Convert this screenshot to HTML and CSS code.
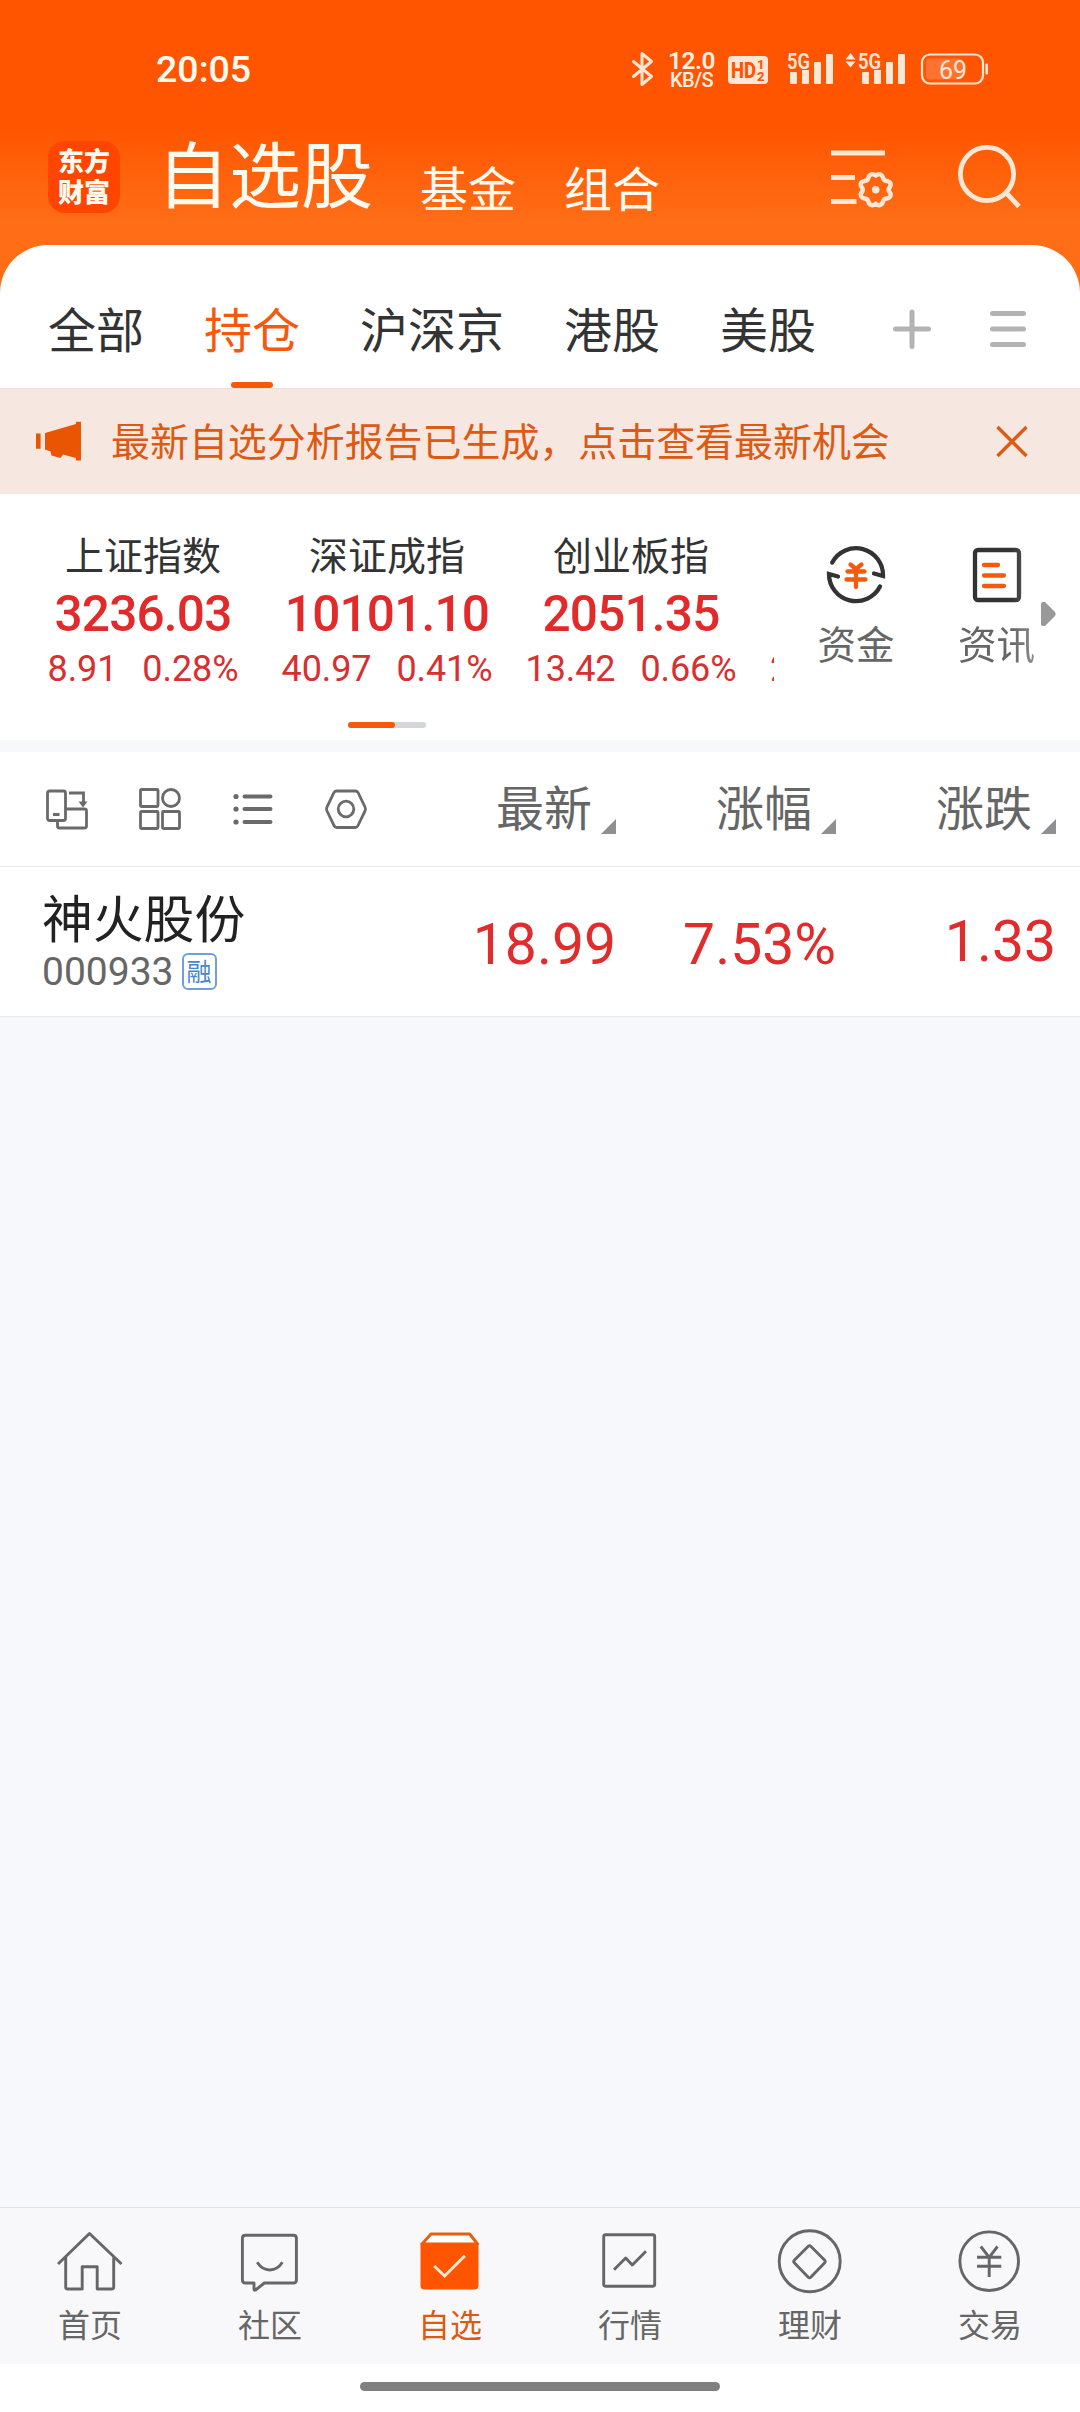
FILE: index.html
```html
<!DOCTYPE html>
<html lang="zh-CN">
<head>
<meta charset="utf-8">
<title>自选股</title>
<link rel="stylesheet" href="styles.css">
</head>
<body>
<div class="app">
  <header class="top">
    <div class="status">
      <span class="clock">20:05</span>
      <div class="status-icons">
        <svg class="bt" width="22" height="36" viewBox="0 0 22 36"><path d="M1.5 10.5 19.500 25.500 10 33.500V2.500L19.500 10.500 1.500 25.500"/></svg>
        <div class="speed"><b>12.0</b><span>KB/S</span></div>
        <svg class="hd" width="40" height="28" viewBox="0 0 40 28"><rect width="40" height="28" rx="4"/><g class="hd-text"><text x="3" y="22" font-size="22" textLength="25" lengthAdjust="spacingAndGlyphs">HD</text><text x="29" y="13" font-size="13">1</text><text x="29" y="25" font-size="13">2</text></g></svg>
        <svg class="sig sig-one" width="48" height="34" viewBox="0 0 48 34"><text x="0" y="17.500" textLength="23" lengthAdjust="spacingAndGlyphs">5G</text><path d="M3 22a1 1 0 0 1 1-1h5a1 1 0 0 1 1 1v10a1 1 0 0 1-1 1H4a1 1 0 0 1-1-1zM15 19h7v13a1 1 0 0 1-1 1h-5a1 1 0 0 1-1-1zM27 12a1 1 0 0 1 1-1h5a1 1 0 0 1 1 1v20a1 1 0 0 1-1 1h-5a1 1 0 0 1-1-1zM39 4a1 1 0 0 1 1-1h5a1 1 0 0 1 1 1v28a1 1 0 0 1-1 1h-5a1 1 0 0 1-1-1z"/></svg>
        <svg class="sig sig-two" width="61" height="34" viewBox="0 0 61 34"><path d="M5.500 2 10.500 8.500H.5zM5.500 16.500.5 10.500h10z"/><text x="13" y="17.500" textLength="23" lengthAdjust="spacingAndGlyphs">5G</text><path d="M17 22a1 1 0 0 1 1-1h5a1 1 0 0 1 1 1v10a1 1 0 0 1-1 1h-5a1 1 0 0 1-1-1zM29 19h7v13a1 1 0 0 1-1 1h-5a1 1 0 0 1-1-1zM41 12a1 1 0 0 1 1-1h5a1 1 0 0 1 1 1v20a1 1 0 0 1-1 1h-5a1 1 0 0 1-1-1zM53 4a1 1 0 0 1 1-1h5a1 1 0 0 1 1 1v28a1 1 0 0 1-1 1h-5a1 1 0 0 1-1-1z"/></svg>
        <svg class="battery" width="68" height="32" viewBox="0 0 68 32"><rect class="case" x="1" y="1.500" width="61" height="29" rx="8"/><rect class="level" x="5" y="5.500" width="37" height="21" rx="4"/><rect class="nub" x="64.500" y="10.500" width="2.500" height="11" rx="1"/><text x="18" y="25.500">69</text></svg>
      </div>
    </div>
    <div class="titlebar">
      <div class="logo"><span>东方</span><span>财富</span></div>
      <h1>自选股</h1>
      <span class="sub-title fund">基金</span>
      <span class="sub-title combo">组合</span>
      <svg class="filter" width="64" height="60" viewBox="0 0 64 60"><path d="M1 7h54M1 31.500h24M1 55.500h25.500"/><path class="gear" d="M45.700 29.500c2.800-2.200 6.300-1.500 7.300 2.300.5 2.200 1.400 2.900 3.600 3.200 3.900.5 5.200 3.500 3 6.300-1.200 1.500-1.200 3.300 0 4.800 2.200 2.800.9 5.800-3 6.300-2.200.3-3.100 1-3.600 3.200-1 3.800-4.500 4.500-7.300 2.300-2.800 2.200-6.300 1.500-7.300-2.300-.5-2.200-1.400-2.900-3.600-3.200-3.900-.5-5.200-3.500-3-6.300 1.200-1.500 1.200-3.300 0-4.800-2.200-2.800-.9-5.800 3-6.300 2.200-.3 3.100-1 3.600-3.200 1-3.800 4.500-4.500 7.300-2.300z"/><circle class="dot" cx="45.700" cy="43.700" r="3.800"/></svg>
      <svg class="search" width="64" height="66" viewBox="0 0 64 66"><circle cx="30" cy="30" r="26.600"/><path d="M48.500 48 62 62.500"/></svg>
    </div>
  </header>

  <nav class="tabs">
    <a>全部</a>
    <a class="active">持仓</a>
    <a>沪深京</a>
    <a>港股</a>
    <a>美股</a>
    <svg class="plus" width="40" height="40" viewBox="0 0 40 40"><path d="M3.500 20h33M20 3v34.500"/></svg>
    <svg class="menu" width="36" height="40" viewBox="0 0 36 40"><path d="M2.500 4.500h31M2.500 20h31M2.500 35.500h31"/></svg>
  </nav>

  <div class="notice">
    <svg class="horn" width="46" height="40" viewBox="0 0 46 40"><path d="M0 12.500h4.600v15.300H0zM9 12 40 3V.7h5V39.600h-5V37L27 33.500 24.500 37 15.500 34.500 14.500 30.500 9 28.500z"/></svg>
    <p>最新自选分析报告已生成，点击查看最新机会</p>
    <svg class="close" width="32" height="32" viewBox="0 0 32 32"><path d="M1.500 2 30.500 31M30.500 2 1.500 31"/></svg>
  </div>

  <section class="market">
    <div class="market-row">
      <div class="indices">
        <div class="index"><h2>上证指数</h2><strong>3236.03</strong><p><span>8.91</span><span>0.28%</span></p></div>
        <div class="index"><h2>深证成指</h2><strong>10101.10</strong><p><span>40.97</span><span>0.41%</span></p></div>
        <div class="index"><h2>创业板指</h2><strong>2051.35</strong><p><span>13.42</span><span>0.66%</span></p></div>
        <div class="index next"><p><span>2</span></p></div>
      </div>
      <div class="shortcuts">
        <div class="shortcut">
          <svg width="64" height="64" viewBox="0 0 64 64"><path class="ring" d="M8.200 19.500A27 27 0 0 1 59 33l-9-2.500M56 43.500A27 27 0 0 1 5 31l9 2.500"/><path class="yen" d="M26.500 21.500 32 26l5.500-4.500M23.500 28.500h17M22.500 36.500h19M32 26v18"/></svg>
          <span>资金</span>
        </div>
        <div class="shortcut faded">
          <svg width="64" height="64" viewBox="0 0 64 64"><rect class="doc" x="10" y="7" width="44" height="50" rx="3"/><path class="yen" d="M19 22h14M19 32.500h20M19 43h20"/></svg>
          <span>资讯</span>
        </div>
      </div>
      <svg class="more" width="15" height="24" viewBox="0 0 15 24"><path d="M0 2Q0 0 2 0H4L14 10Q15.500 12 14 14L4 24H2Q0 24 0 22z"/></svg>
    </div>
    <div class="pager"><i></i></div>
  </section>

  <section class="list-head">
    <div class="tools">
      <svg width="42" height="42" viewBox="0 0 42 42"><rect x="1.500" y="3" width="18" height="29.500" rx="2"/><path d="M7 26.500h6.500M23 5h14.500v10M11.500 34v4q0 2 2 2h25q2 0 2-2V23q0-2-2-2H20"/><path class="fill" d="M32.500 13.500h9L37 19.500z"/></svg>
      <svg width="42" height="42" viewBox="0 0 42 42"><rect x="1.500" y="1.500" width="17.500" height="17" rx="1"/><circle cx="32" cy="10" r="8.500"/><rect x="1.500" y="23.500" width="17.500" height="17" rx="1"/><rect x="23.500" y="23.500" width="17" height="17" rx="1"/></svg>
      <svg width="42" height="42" viewBox="0 0 42 42"><path class="bars" d="M12.500 8.500h26M12.500 21h26M12.500 34h26"/><g class="fill"><circle cx="4" cy="8.500" r="2.600"/><circle cx="4" cy="21" r="2.600"/><circle cx="4" cy="34" r="2.600"/></g></svg>
      <svg width="42" height="42" viewBox="0 0 42 42"><path d="M11.500 3h19q1.500 0 2.500 1.500l7 14.500q1 2 0 4l-7 14.500q-1 2-2.500 2h-19q-1.500 0-2.500-2L2 23q-1-2 0-4L9 4.500q1-1.500 2.500-1.500z"/><circle cx="21" cy="21" r="7.800"/></svg>
    </div>
    <div class="col">最新<i></i></div>
    <div class="col">涨幅<i></i></div>
    <div class="col">涨跌<i></i></div>
  </section>

  <section class="stock">
    <div class="stock-name"><h3>神火股份</h3><div class="code"><span>000933</span><em>融</em></div></div>
    <div class="val">18.99</div>
    <div class="val">7.53%</div>
    <div class="val change">1.33</div>
  </section>

  <main class="blank"></main>

  <nav class="bottom">
    <a><svg width="64" height="64" viewBox="0 0 64 64"><path d="M0 34 31.500 3.500 63.500 34M7.700 27v30q0 2 2 2h14.500V36.700h15V59h14.500q2 0 2-2V27"/></svg><span>首页</span></a>
    <a><svg width="64" height="64" viewBox="0 0 64 64"><path d="M7.400 5.300h48q3 0 3 3V50q0 3-3 3h-29L17.500 60q-1.500.8-1.500-1V53H7.400q-3 0-3-3V8.300q0-3 3-3z"/><path d="M19.200 32.300q5 7.700 12.600 7.700t12.600-7.700"/></svg><span>社区</span></a>
    <a class="active"><svg width="64" height="64" viewBox="0 0 64 64"><path class="lid" d="M4 14 13 4h38.700L59.500 14z"/><path class="box" d="M2.500 13h58v42.500q0 4-4 4h-50q-4 0-4-4z"/><path class="tick" d="M16.200 36 26.600 46 46.900 25.700"/></svg><span>自选</span></a>
    <a><svg width="64" height="64" viewBox="0 0 64 64"><rect x="5.700" y="4.700" width="51" height="51.500" rx="2"/><path d="M16 39.700 27.700 28 34.300 35 48 21.300"/></svg><span>行情</span></a>
    <a><svg width="64" height="64" viewBox="0 0 64 64"><circle cx="31.700" cy="31.300" r="30.500"/><path d="M30 16.500q1.500-1.500 3 0L46.500 30q1.500 1.500 0 3L33 47q-1.500 1.500-3 0L16.500 33q-1.500-1.500 0-3z"/></svg><span>理财</span></a>
    <a><svg width="64" height="64" viewBox="0 0 64 64"><circle cx="31.200" cy="31.200" r="29.300"/><path d="M22.800 16.500 31.200 27.300 39.500 16.500M19 27.300h24.300M19 36.300h24.300M31.200 27.300V47"/></svg><span>交易</span></a>
  </nav>
  <div class="home-indicator"><i></i></div>
</div>
</body>
</html>
```
FILE: styles.css
```css
* { box-sizing: border-box; margin: 0; padding: 0; }
body { font-family: "Noto Sans CJK SC", sans-serif; background: #fff; color: #333; }
svg { display: block; flex: none; fill: none; overflow: visible; }
i, em { font-style: normal; display: block; }
.app { width: 1080px; height: 2412px; display: flex; flex-direction: column; overflow: hidden; background: linear-gradient(#ff6e17 0 300px, #fff 300px); }
.app > * { flex: none; }

.top { height: 245px; background: linear-gradient(#ff5500 0, #ff5500 125px, #ff6e17 225px); color: #fffaf0; }
.status { height: 141px; padding: 50px 91px 0 156px; display: flex; justify-content: space-between; }
.clock { font: 500 37.5px/38px Roboto, sans-serif; }
.status-icons { display: flex; align-items: flex-start; font-family: Roboto, sans-serif; color: #ffe6d5; }
.status-icons text { fill: currentColor; }
.bt { margin-top: 1px; stroke: #ffe6d5; stroke-width: 3; stroke-linejoin: round; stroke-linecap: round; }
.speed { width: 45px; margin: 1px 14px 0 15px; display: flex; flex-direction: column; align-items: center; color: #fff0e4; }
.speed b { font-size: 24.500px; line-height: 20px; font-weight: 600; letter-spacing: -0.5px; }
.speed span { font-size: 20px; line-height: 19px; font-weight: 500; letter-spacing: -0.5px; }
.hd { margin-top: 6px; fill: #ffe6d5; }
.hd .hd-text text { fill: #ff5500; font-weight: 800; }
.sig { margin-top: 1px; fill: #ffe6d5; }
.sig text { font-size: 21.500px; font-weight: 600; }
.sig-one { margin-left: 19px; }
.sig-two { margin-left: 10px; }
.battery { margin: 3px 0 0 15px; }
.battery .case { stroke: #ffe6d5; stroke-width: 2.2; }
.battery .level { fill: #ff7230; }
.battery .nub { fill: #ffe6d5; }
.battery text { font-size: 25px; font-weight: 400; }

.titlebar { height: 104px; padding-left: 48px; display: flex; align-items: flex-start; }
.logo { width: 72px; height: 72px; border-radius: 17px; background: #ff4500; display: flex; flex-direction: column; align-items: center; padding-top: 3px; font-weight: 900; font-size: 26px; }
.logo span { line-height: 31px; }
h1 { margin: -6px 0 0 37px; width: 220px; font-weight: 400; font-size: 72px; line-height: 72px; white-space: nowrap; }
.sub-title { font-size: 48px; line-height: 50px; margin-top: 20px; }
.fund { margin-left: 43px; }
.combo { margin-left: 48px; }
.filter { margin: 5px 0 0 170px; stroke: #ffe6d5; stroke-width: 4.800; }
.filter .gear { stroke-width: 4.500; }
.filter .dot { fill: #ffe6d5; stroke: none; }
.search { margin: 3px 0 0 63px; stroke: #ffe6d5; stroke-width: 4.800; }

.tabs { height: 143px; background: #fff; border-radius: 48px 48px 0 0; padding-left: 48px; display: flex; align-items: flex-start; }
.tabs a { font-size: 48px; line-height: 60px; margin: 52px 60px 0 0; height: 91px; color: #333; }
.tabs .active { color: #f6590c; display: flex; flex-direction: column; align-items: center; }
.tabs .active::after { content: ""; width: 42px; height: 6px; border-radius: 3px; background: #f6590c; margin-top: 25px; }
.plus { margin: 64px 0 0 16px; stroke: #b3b3b3; stroke-width: 5; stroke-linecap: round; }
.menu { margin: 64px 0 0 58px; stroke: #b3b3b3; stroke-width: 5; stroke-linecap: round; }

.notice { height: 106px; background: #f6e7e0; border-top: 1px solid #ece0da; display: flex; align-items: center; padding: 0 52px 2px 36px; color: #dc5a14; }
.horn { fill: #ea5504; }
.notice p { font-size: 38.950px; line-height: 50px; margin: -4px 0 0 29px; flex: 1; white-space: nowrap; }
.close { stroke: #dc5a14; stroke-width: 3.400; }

.market { height: 258px; background: #fff; border-bottom: 12px solid #f6f8fb; }
.market-row { height: 228px; display: flex; }
.indices { width: 774px; padding-left: 21px; display: flex; overflow: hidden; }
.index { flex: none; width: 244px; display: flex; flex-direction: column; align-items: center; }
.index h2 { font-weight: 400; font-size: 39px; line-height: 50px; margin-top: 34px; }
.index strong { font: 500 49.500px/58px Roboto, sans-serif; letter-spacing: -0.8px; color: #e22a2a; margin-top: 7px; }
.index p { font: 400 36px/44px Roboto, sans-serif; letter-spacing: -0.1px; color: #d63030; display: flex; gap: 25px; margin-top: 4px; }
.next { align-items: flex-start; padding: 153px 0 0 17px; }
.next p { margin-top: 0; }
.shortcuts { display: flex; padding: 49px 0 0 12px; }
.shortcut { width: 141px; display: flex; flex-direction: column; align-items: center; font-size: 38.500px; line-height: 50px; color: #666; }
.shortcut span { margin-top: 10px; }
.shortcut:first-child { width: 140px; }
.faded { mask-image: linear-gradient(90deg, #000 60%, rgba(0,0,0,.6) 88%); }
.ring, .doc { stroke: #333; stroke-width: 4.300; stroke-linecap: round; }
.yen { stroke: #f25a0f; stroke-width: 4.300; stroke-linecap: round; }
.more { fill: #999; margin: 108px 0 0 -26px; }
.pager { width: 78px; height: 6px; border-radius: 3px; background: #d4d6dc; margin-left: 348px; }
.pager i { width: 47px; height: 6px; border-radius: 3px; background: #f6590c; }

.list-head { height: 115px; background: #fff; border-bottom: 1px solid #e9e9e9; display: flex; padding-right: 24px; }
.tools { width: 396px; display: flex; gap: 51px; padding: 36px 0 0 46px; }
.tools svg { stroke: #6a6a6a; stroke-width: 2.800; }
.tools .fill { fill: #6a6a6a; stroke: none; }
.tools .bars { stroke-width: 4; stroke-linecap: round; }
.col { width: 220px; display: flex; justify-content: flex-end; align-items: flex-start; font-size: 48px; line-height: 60px; padding-top: 23px; color: #666; }
.col i { width: 15px; height: 15px; margin: 44px 0 0 9px; background: #8f8f94; clip-path: polygon(100% 0, 100% 100%, 0 100%); }

.stock { height: 150px; background: #fff; border-bottom: 1px solid #e9eaec; display: flex; padding-right: 24px; }
.stock-name { width: 396px; padding: 18px 0 0 42px; }
h3 { font-weight: 400; font-size: 50.800px; line-height: 62px; color: #222; }
.code { display: flex; align-items: flex-start; margin-top: 6px; }
.code span { font: 400 39px/40px Roboto, sans-serif; color: #666; margin-top: -1px; }
.code em { width: 35px; height: 37px; margin-left: 8px; border: 2px solid #6fa1d6; border-radius: 6px; font-size: 25px; line-height: 31px; text-align: center; color: #4a86cc; }
.val { width: 220px; text-align: right; font: 400 57px/66px Roboto, sans-serif; color: #e02c2c; padding-top: 45px; }
.change { padding-top: 42px; }

.app > .blank { flex: 1; background: #f7f8fb; }
.bottom { height: 157px; background: #f8f8fb; border-top: 1px solid #e2e2e4; display: flex; }
.bottom a { width: 180px; display: flex; flex-direction: column; align-items: center; padding-top: 22px; font-size: 32px; line-height: 44px; color: #666; }
.bottom svg { stroke: #666; stroke-width: 2.900; stroke-linejoin: round; }
.bottom span { margin-top: 7px; }
.bottom .active { color: #dc5a14; }
.bottom .lid { stroke: #e4600f; fill: #fff; }
.bottom .box { fill: #ff5500; stroke: none; }
.bottom .tick { stroke: #ffe9d2; stroke-linejoin: miter; }
.home-indicator { height: 48px; background: #fff; padding: 18px 0 0 360px; }
.home-indicator i { width: 360px; height: 9px; border-radius: 5px; background: #808080; }
```
